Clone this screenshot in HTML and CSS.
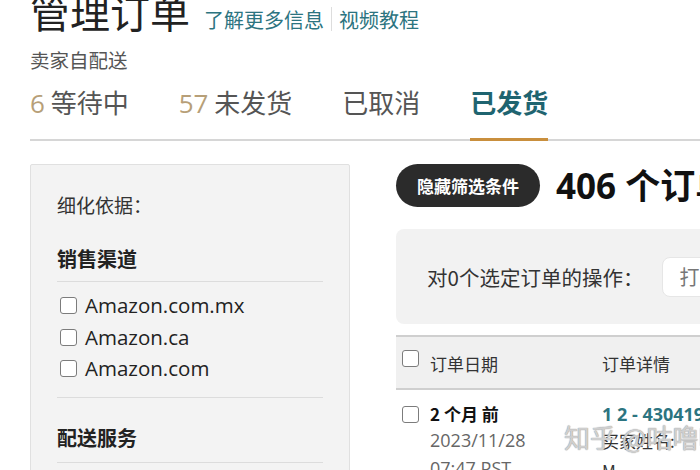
FILE: index.html
```html
<!DOCTYPE html>
<html lang="zh-CN">
<head>
<meta charset="utf-8">
<link rel="stylesheet" href="styles.css">
</head>
<body>
<div class="page">
  <header class="head">
    <div class="title-row">
      <h1 class="title">管理订单</h1>
      <a class="link">了解更多信息</a>
      <span class="sep"></span>
      <a class="link">视频教程</a>
    </div>
    <div class="subtitle">卖家自配送</div>
    <nav class="tabs">
      <span class="tab"><span class="num">6</span> 等待中</span>
      <span class="tab"><span class="num">57</span> 未发货</span>
      <span class="tab">已取消</span>
      <span class="tab active">已发货</span>
    </nav>
  </header>

  <div class="body">
    <aside class="filters">
      <div class="refine">细化依据：</div>
      <div class="group-title">销售渠道</div>
      <ul class="opts">
        <li><span class="cb"></span>Amazon.com.mx</li>
        <li><span class="cb"></span>Amazon.ca</li>
        <li><span class="cb"></span>Amazon.com</li>
      </ul>
      <div class="group-title second">配送服务</div>
      <div class="rule"></div>
    </aside>

    <main class="main">
      <div class="top">
        <span class="pill">隐藏筛选条件</span>
        <span class="count">406 个订单</span>
      </div>
      <div class="actions">
        <span class="act-label">对0个选定订单的操作：</span>
        <span class="act-input">打印装箱单</span>
      </div>
      <div class="table">
        <div class="thead">
          <div class="c1"><span class="cb"></span>订单日期</div>
          <div class="c2">订单详情</div>
        </div>
        <div class="trow">
          <div class="c1">
            <span class="cb"></span>
            <div class="cell">
              <div class="ago">2 个月 前</div>
              <div class="date">2023/11/28</div>
              <div class="date">07:47 PST</div>
            </div>
          </div>
          <div class="c2">
            <div class="oid">1 2 - 4304191</div>
            <div class="buyer">买家姓名:</div>
            <div class="buyer">M</div>
          </div>
        </div>
      </div>
      <div class="watermark">知乎 @咕噜噜</div>
    </main>
  </div>
</div>
</body>
</html>
```
FILE: styles.css
```css
* { box-sizing: border-box; }
html, body { margin: 0; padding: 0; background: #fff; }
body {
  width: 700px;
  height: 470px;
  overflow: hidden;
  font-family: "Noto Sans CJK SC", "Open Sans", sans-serif;
  color: #333;
}
.page { width: 1000px; padding-left: 30px; }

.title-row {
  display: flex;
  align-items: baseline;
  margin-top: -9px;
  height: 40px;
}
.title {
  margin: 0;
  font-size: 40px;
  line-height: 40px;
  font-weight: 400;
  color: #222;
}
.link {
  font-size: 20px;
  color: #2c7480;
  line-height: 20px;
}
.title-row .link:first-of-type { margin-left: 14px; }
.sep {
  width: 1px;
  height: 24px;
  background: #ddd;
  margin: 0 7px;
  align-self: center;
  position: relative;
  top: 8px;
}
.subtitle {
  margin-top: 17px;
  font-size: 19.5px;
  color: #555;
  line-height: 24px;
}
.tabs {
  display: flex;
  gap: 50px;
  margin-top: 13px;
  border-bottom: 2px solid #d6d6d6;
  width: 970px;
}
.tab {
  font-size: 26px;
  line-height: 34px;
  color: #555;
  padding-bottom: 18px;
  border-bottom: 3px solid transparent;
  margin-bottom: -2px;
}
.tab .num { color: #b79f78; font-family: "Open Sans", sans-serif; }
.tab.active {
  color: #1f6470;
  font-weight: 700;
  border-bottom-color: #c98f3d;
}

.body {
  display: flex;
  gap: 46px;
  margin-top: 23px;
  align-items: flex-start;
}
.filters {
  width: 320px;
  flex: none;
  background: #f3f3f3;
  border: 1px solid #e0e0e0;
  border-radius: 2px;
  padding: 28px 26px 0 26px;
  height: 320px;
}
.refine { font-size: 19px; color: #333; line-height: 24px; }
.group-title {
  margin-top: 30px;
  font-size: 20px;
  font-weight: 700;
  color: #222;
  line-height: 24px;
  padding-bottom: 10px;
  border-bottom: 1px solid #dcdcdc;
}
.group-title.second { margin-top: 0; padding-top: 28px; padding-bottom: 12px; }
.opts {
  list-style: none;
  margin: 0;
  padding: 8px 0 12px;
  border-bottom: 1px solid #dcdcdc;
}
.opts li {
  display: flex;
  align-items: center;
  font-family: "Open Sans", sans-serif;
  font-size: 20.5px;
  color: #222;
  line-height: 31.5px;
}
.cb {
  display: inline-block;
  width: 17px;
  height: 17px;
  border: 1.5px solid #7c7c7c;
  border-radius: 3px;
  background: #fff;
  margin: 0 8px 0 3px;
  flex: none;
}

.main { position: relative; flex: none; width: 560px; }
.top { display: flex; align-items: center; gap: 16px; margin-top: 0; height: 43px; }
.pill {
  background: #2b2b2b;
  color: #fff;
  font-weight: 700;
  font-size: 17px;
  height: 43px;
  line-height: 43px;
  padding: 0 21px;
  border-radius: 22px;
}
.count {
  font-family: "Open Sans", "Noto Sans CJK SC", sans-serif;
  font-size: 35px;
  line-height: 43px;
  font-weight: 700;
  color: #111;
}
.actions {
  margin-top: 22px;
  background: #f2f2f2;
  border-radius: 8px;
  height: 95px;
  display: flex;
  align-items: center;
  padding-left: 31px;
  gap: 19px;
}
.act-label { font-size: 20.5px; color: #333; }
.act-input {
  background: #fff;
  border: 1px solid #e6e6e6;
  border-radius: 8px;
  height: 40px;
  line-height: 38px;
  padding: 0 16px;
  font-size: 20px;
  color: #777;
}
.table { margin-top: 11px; }
.thead {
  display: flex;
  background: #f0f0f0;
  border-top: 2px solid #cfcfcf;
  border-bottom: 2px solid #cfcfcf;
  height: 55px;
  align-items: center;
}
.c1 { width: 206px; display: flex; align-items: center; padding-left: 4px; font-size: 17px; color: #333; }
.c2 { font-size: 17px; color: #333; }
.thead .c1, .thead .c2 { padding-top: 2px; }
.thead .cb { margin: 0 11px 0 2px; position: relative; top: -5px; }
.trow { display: flex; padding-top: 12px; }
.trow .c1 { align-items: flex-start; }
.trow .cb { margin: 4px 11px 0 2px; }
.ago { font-size: 17px; font-weight: 700; color: #111; line-height: 24px; }
.date { font-family: "Open Sans", sans-serif; font-size: 18px; color: #666; line-height: 28px; }
.date:first-of-type { margin-top: 3px; }
.oid { color: #2c7480; font-family: "Open Sans", sans-serif; font-weight: 700; font-size: 18px; line-height: 24px; }
.buyer { font-size: 17px; color: #333; line-height: 30px; }
.watermark {
  position: absolute;
  left: 168px;
  top: 254px;
  font-size: 26px;
  color: rgba(255,255,255,0.55);
  text-shadow: 0 0 1px #999, 0 0 1px #999;
  white-space: nowrap;
}
```
